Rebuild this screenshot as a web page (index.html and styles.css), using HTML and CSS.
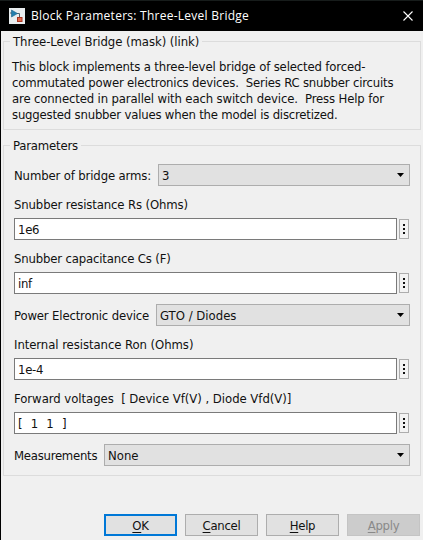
FILE: index.html
```html
<!DOCTYPE html>
<html lang="en">
<head>
<meta charset="utf-8">
<title>Block Parameters: Three-Level Bridge</title>
<link rel="stylesheet" href="styles.css">
</head>
<body>
<div class="dialog">
  <header class="titlebar">
    <svg class="app-icon" width="16" height="16" viewBox="0 0 16 16">
      <rect width="16" height="16" fill="#e9edef"/>
      <path d="M1 5h2M8 5.500h2.500v5" fill="none" stroke="#52616b"/>
      <path d="M2.500 2l6 3.500-6 3.500z" fill="#247fae" stroke="#195f88" stroke-width=".6"/>
      <rect x="8.500" y="9.500" width="4.500" height="4" fill="#e76b4c" stroke="#a73521"/>
    </svg>
    <h1 class="title">Block Parameters: Three-Level Bridge</h1>
    <svg class="close" width="10" height="10" viewBox="0 0 10 10"><path d="M.5.5l9 9M9.500.5l-9 9" stroke="#fff" stroke-width="1.100"/></svg>
  </header>
  <main class="content">
    <section class="group about">
      <h2 class="legend"><span class="t-mask">Three-Level Bridge (mask) (link)</span></h2>
      <p class="description"><span class="d1">This block implements a three-level bridge of selected forced-</span><br><span class="d2">commutated power electronics devices.  Series RC snubber circuits</span><br><span class="d3">are connected in parallel with each switch device.  Press Help for</span><br><span class="d4">suggested snubber values when the model is discretized.</span></p>
    </section>
    <section class="group params">
      <h2 class="legend"><span class="t-params">Parameters</span></h2>
      <div class="row"><span class="label l-arms">Number of bridge arms:</span><div class="select s-arms">3<i class="arrow"></i></div></div>
      <div class="caption"><span class="t-rs">Snubber resistance Rs (Ohms)</span></div>
      <div class="row field"><div class="input">1e6</div><div class="more"><i></i><i></i><i></i></div></div>
      <div class="caption"><span class="t-cs">Snubber capacitance Cs (F)</span></div>
      <div class="row field"><div class="input">inf</div><div class="more"><i></i><i></i><i></i></div></div>
      <div class="row device"><span class="label l-device">Power Electronic device</span><div class="select">GTO / Diodes<i class="arrow"></i></div></div>
      <div class="caption"><span class="t-ron">Internal resistance Ron (Ohms)</span></div>
      <div class="row field"><div class="input">1e-4</div><div class="more"><i></i><i></i><i></i></div></div>
      <div class="caption"><span class="t-vf">Forward voltages  [ Device Vf(V) , Diode Vfd(V)]</span></div>
      <div class="row field"><div class="input vector">[  1  1  ]</div><div class="more"><i></i><i></i><i></i></div></div>
      <div class="row device"><span class="label l-meas">Measurements</span><div class="select">None<i class="arrow"></i></div></div>
    </section>
    <footer class="actions">
      <div class="button primary"><span><u>O</u>K</span></div>
      <div class="button"><span><u>C</u>ancel</span></div>
      <div class="button"><span><u>H</u>elp</span></div>
      <div class="button disabled"><span><u>A</u>pply</span></div>
    </footer>
  </main>
</div>
</body>
</html>
```

FILE: styles.css
```css
* { box-sizing: border-box; }
body { margin: 0; background: #000; }
.dialog {
  width: 423px; height: 540px; overflow: hidden;
  font: 13px/16px Tahoma, "DejaVu Sans Condensed", "DejaVu Sans", sans-serif;
  font-stretch: condensed; color: #111; white-space: pre;
  display: flex; flex-direction: column;
}
.titlebar {
  height: 31px; flex: none; display: flex; align-items: center;
  padding: 0 10px 0 9px; background: #000; color: #fff;
  border-top: 1px solid #171c1b;
}
.title { margin: 0 0 0 6px; flex: 1; font: 12px/16px "Open Sans", sans-serif; letter-spacing: .26px; }
.close { display: block; }
.content {
  flex: 1; margin-left: 1px; padding: 10px 2px 0; background: #f0f0f0;
  display: flex; flex-direction: column; white-space: normal;
}
.group { border: 1px solid #dcdcdc; flex: none; white-space: pre; display: flex; flex-direction: column; }
.about { height: 89px; }
.params { height: 331px; margin-top: 15px; padding-right: 10px; }
.legend {
  font: inherit; margin: -8px 0 0 6px; padding: 0 3px; height: 16px;
  background: #f0f0f0; align-self: flex-start;
}
.t-mask { letter-spacing: -.06px; }
.t-params { letter-spacing: -.2px; }
.description { margin: 9px 0 0 8px; }
.d1 { letter-spacing: -.16px; }
.d2 { letter-spacing: -.19px; }
.d3 { letter-spacing: -.14px; }
.d4 { letter-spacing: -.2px; }
.row { height: 22px; margin: 0 0 0 10px; display: flex; flex: none; }
.legend + .row { margin-top: 10px; }
.label { line-height: 24px; flex: none; }
.l-arms { width: 144px; letter-spacing: -.14px; }
.l-device { width: 142px; letter-spacing: -.16px; }
.l-meas { width: 90px; letter-spacing: -.26px; }
.select {
  flex: 1; display: flex; justify-content: space-between; line-height: 22px;
  background: #e1e1e1; border: 1px solid #adadad; padding: 0 5px 0 3px;
}
.arrow { width: 7px; height: 4px; margin-top: 8px; background: #000; clip-path: polygon(0 0, 100% 0, 50% 100%); }
.caption { height: 16px; margin: 11px 0 5px 10px; flex: none; }
.t-rs { letter-spacing: -.13px; }
.t-cs { letter-spacing: -.17px; }
.t-ron { letter-spacing: -.07px; }
.t-vf { letter-spacing: -.04px; }
.input {
  width: 383px; background: #fff; border: 1px solid #7a7a7a;
  padding-left: 3px; line-height: 21px; letter-spacing: -.3px;
}
.vector { letter-spacing: .25px; }
.more {
  width: 10px; height: 20px; margin: 1px 0 0 2px; border: 1px solid #adadad;
  background: #f3f3f3; display: flex; flex-direction: column; align-items: center;
  justify-content: center; gap: 2px;
}
.more i { width: 2px; height: 2px; background: #111; }
.device { margin-top: 10px; }
.actions { display: flex; justify-content: flex-end; gap: 8px; margin: 38px 1px 0 0; }
.button {
  width: 73px; height: 22px; border: 1px solid #adadad; background: #e1e1e1;
  padding-top: 2px; display: flex; align-items: center; justify-content: center; letter-spacing: -.3px;
}
.button u { text-underline-offset: 2px; }
.primary { border: 2px solid #0078d7; }
.disabled { background: #ccc; border-color: #c4c4c4; color: #898989; }
```
